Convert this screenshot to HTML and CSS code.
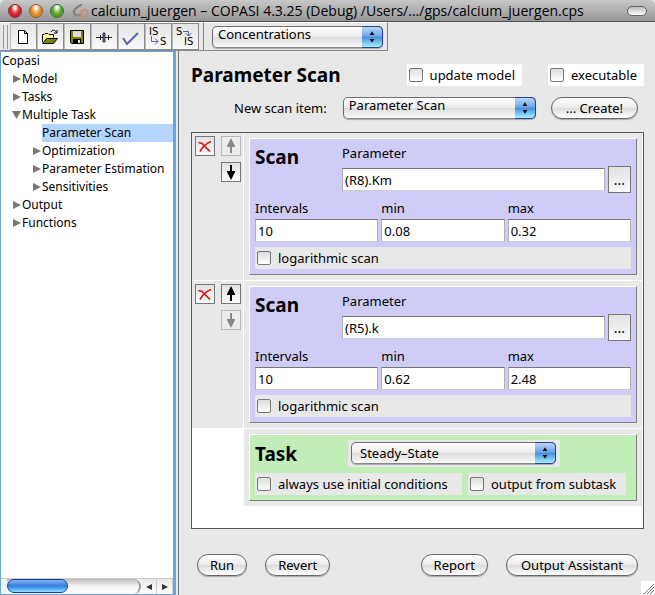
FILE: index.html
```html
<!DOCTYPE html>
<html lang="en">
<head>
<meta charset="utf-8">
<title>calcium_juergen - COPASI 4.3.25 (Debug)</title>
<link rel="stylesheet" href="styles.css">
</head>
<body>
<svg class="defs" width="0" height="0" aria-hidden="true">
  <symbol id="cross" viewBox="0 0 14 12"><path d="M0.500 2.500L4 3.500L12 11.500M13 1.500C8 3.500 4.500 7 2 11.500" fill="none" stroke="#d81818" stroke-width="1.700"/></symbol>
  <symbol id="up" viewBox="0 0 10 16"><path d="M5 0L9 8V9H6V15H4V9H1V8Z" fill="currentColor"/></symbol>
  <symbol id="down" viewBox="0 0 10 16"><path d="M5 16L9 8V7H6V1H4V7H1V8Z" fill="currentColor"/></symbol>
  <symbol id="updown" viewBox="0 0 21 20"><path d="M10.500 4L13 8H8ZM10.500 16L13 12H8Z" fill="#111"/></symbol>
  <symbol id="closed" viewBox="0 0 9 10"><path d="M1 1L9 5L1 9Z" fill="#777"/></symbol>
  <symbol id="open" viewBox="0 0 9 10"><path d="M0 1H9L4.500 9Z" fill="#777"/></symbol>
</svg>

<header class="titlebar">
  <button class="light red" aria-label="Close"></button>
  <button class="light amber" aria-label="Minimize"></button>
  <button class="light green" aria-label="Zoom"></button>
  <svg class="logo" width="17" height="14" viewBox="0 0 17 14" fill="none" stroke-linecap="round" aria-hidden="true">
    <path d="M9 1C5 3 1 6 2 9C3 12 8 12 9 10" stroke="#8d7b70" stroke-width="2"/>
    <path d="M9 10C9 5 15 4 15 8C15 12 9 14 6 12" stroke="#bf9478" stroke-width="2"/>
  </svg>
  <span class="title">calcium_juergen – COPASI 4.3.25 (Debug) /Users/.../gps/calcium_juergen.cps</span>
  <button class="pill" aria-label="Toggle toolbar"></button>
</header>

<div class="toolbar">
  <div class="tools">
    <span class="grip"></span>
    <button class="tool" aria-label="New"><svg width="26" height="26" viewBox="0 0 26 26"><path d="M7.500 6.500H13.500L16.500 9.500V19.500H7.500ZM13.500 6.500V9.500H16.500" fill="#fff" stroke="#000"/></svg></button>
    <button class="tool" aria-label="Open"><svg width="26" height="26" viewBox="0 0 26 26"><path d="M4.500 18V10.500H6L7 9.500H10L11 10.500H15.500V13.500" fill="#ffffa0" stroke="#000"/><path d="M4.500 19.500L8.500 14.500H19.500L15.500 19.500Z" fill="#808000" stroke="#000"/><path d="M13 8C14 5.500 17 5.500 18.500 8.500M19 6V9H16" fill="none" stroke="#000"/></svg></button>
    <button class="tool" aria-label="Save"><svg width="26" height="26" viewBox="0 0 26 26"><path d="M5.500 6.500H18.500V19.500H6.500L5.500 18.500Z" fill="#808000" stroke="#000"/><path d="M8 7H16V13H8Z" fill="#ddd"/><path d="M8 15H16V19H8Z" fill="#000"/><path d="M13 16H15V19H13Z" fill="#ddd"/></svg></button>
    <button class="tool" aria-label="Slider"><svg width="26" height="26" viewBox="0 0 26 26"><path d="M4 13.500H20M8.500 11V16M16.500 11V16" stroke="#222" fill="none"/><path d="M11 9H13V18H11Z" fill="#5961b8" stroke="#222" stroke-width=".8"/></svg></button>
    <button class="tool" aria-label="Check"><svg width="26" height="26" viewBox="0 0 26 26"><path d="M4 14L8 20L19 9" fill="none" stroke="#5961bb" stroke-width="2"/></svg></button>
    <button class="tool" aria-label="Initial state to state"><svg width="26" height="26" viewBox="0 0 26 26"><text x="3" y="11" class="glyph">IS</text><text x="14" y="21" class="glyph">S</text><path d="M5.500 12V17.500H12M9 14.500L12 17.500L9 20.500" fill="none" stroke="#5961bb"/></svg></button>
    <button class="tool" aria-label="State to initial state"><svg width="26" height="26" viewBox="0 0 26 26"><text x="3" y="11" class="glyph">S</text><text x="11" y="21" class="glyph">IS</text><path d="M10 7.500H15.500V12M12.500 9L15.500 12L18.500 9" fill="none" stroke="#5961bb"/></svg></button>
  </div>
  <div class="units">
    <span class="combo high"><select aria-label="Units"><option>Concentrations</option></select><svg class="arrows"><use href="#updown"/></svg></span>
  </div>
</div>

<div class="main">
  <nav class="sidebar">
    <ul class="tree">
      <li class="root">Copasi</li>
      <li><svg><use href="#closed"/></svg>Model</li>
      <li><svg><use href="#closed"/></svg>Tasks</li>
      <li><svg><use href="#open"/></svg>Multiple Task</li>
      <li class="sub"><span class="selected">Parameter Scan</span></li>
      <li class="sub"><svg><use href="#closed"/></svg>Optimization</li>
      <li class="sub"><svg><use href="#closed"/></svg>Parameter Estimation</li>
      <li class="sub"><svg><use href="#closed"/></svg>Sensitivities</li>
      <li><svg><use href="#closed"/></svg>Output</li>
      <li><svg><use href="#closed"/></svg>Functions</li>
    </ul>
    <div class="scrollbar">
      <div class="track"><div class="thumb"></div></div>
      <button aria-label="Scroll left"><svg width="8" height="8" viewBox="0 0 8 8"><path d="M7 1V7L1 4Z" fill="#333"/></svg></button>
      <button aria-label="Scroll right"><svg width="8" height="8" viewBox="0 0 8 8"><path d="M1 1V7L7 4Z" fill="#333"/></svg></button>
    </div>
  </nav>
  <div class="splitter"></div>

  <main class="content">
    <div class="head">
      <h1>Parameter Scan</h1>
      <label class="check white"><input type="checkbox">update model</label>
      <label class="check white"><input type="checkbox">executable</label>
    </div>
    <div class="create">
      <label for="item">New scan item:</label>
      <span class="combo high"><select id="item"><option>Parameter Scan</option></select><svg class="arrows"><use href="#updown"/></svg></span>
      <button class="push">... Create!</button>
    </div>

    <div class="frame">
      <div class="row">
        <div class="moves">
          <button class="mini" aria-label="Delete"><svg width="14" height="12"><use href="#cross"/></svg></button>
          <div class="pair">
            <button class="mini" disabled aria-label="Move up"><svg width="10" height="16"><use href="#up"/></svg></button>
            <button class="mini" aria-label="Move down"><svg width="10" height="16"><use href="#down"/></svg></button>
          </div>
        </div>
        <div class="cell">
          <section class="panel scan">
            <div class="param">
              <h2>Scan</h2>
              <label for="p1">Parameter</label>
              <input type="text" id="p1" value="(R8).Km">
              <button class="more" aria-label="Choose">...</button>
            </div>
            <div class="range">
              <label for="i1">Intervals</label><label for="a1">min</label><label for="b1">max</label>
              <input type="text" id="i1" value="10"><input type="text" id="a1" value="0.08"><input type="text" id="b1" value="0.32">
            </div>
            <label class="check"><input type="checkbox">logarithmic scan</label>
          </section>
        </div>
      </div>
      <div class="row">
        <div class="moves">
          <button class="mini" aria-label="Delete"><svg width="14" height="12"><use href="#cross"/></svg></button>
          <div class="pair">
            <button class="mini" aria-label="Move up"><svg width="10" height="16"><use href="#up"/></svg></button>
            <button class="mini" disabled aria-label="Move down"><svg width="10" height="16"><use href="#down"/></svg></button>
          </div>
        </div>
        <div class="cell">
          <section class="panel scan">
            <div class="param">
              <h2>Scan</h2>
              <label for="p2">Parameter</label>
              <input type="text" id="p2" value="(R5).k">
              <button class="more" aria-label="Choose">...</button>
            </div>
            <div class="range">
              <label for="i2">Intervals</label><label for="a2">min</label><label for="b2">max</label>
              <input type="text" id="i2" value="10"><input type="text" id="a2" value="0.62"><input type="text" id="b2" value="2.48">
            </div>
            <label class="check"><input type="checkbox">logarithmic scan</label>
          </section>
        </div>
      </div>
      <div class="row">
        <div class="blank"></div>
        <div class="cell">
          <section class="panel task">
            <div class="taskhead">
              <h2>Task</h2>
              <div class="holder"><span class="combo"><select aria-label="Task"><option>Steady–State</option></select><svg class="arrows"><use href="#updown"/></svg></span></div>
            </div>
            <div class="options">
              <label class="check"><input type="checkbox">always use initial conditions</label>
              <label class="check"><input type="checkbox">output from subtask</label>
            </div>
          </section>
        </div>
      </div>
    </div>

    <footer class="actions">
      <button class="push">Run</button>
      <button class="push">Revert</button>
      <span class="space"></span>
      <button class="push">Report</button>
      <button class="push wide">Output Assistant</button>
    </footer>
    <svg class="resize" width="14" height="14" viewBox="0 0 14 14" aria-hidden="true"><path d="M0 0H14V14H0Z" fill="#fff"/><path d="M3 13L13 3M6 13L13 6M9 13L13 9" stroke="#777"/></svg>
  </main>
</div>
</body>
</html>
```

FILE: styles.css
```css
* { box-sizing: border-box; }

body {
  margin: 0;
  min-height: 100vh;
  display: flex;
  flex-direction: column;
  background: #e8e8e8;
  color: #000;
  font: 13px/18px "Noto Sans", "Open Sans", sans-serif;
}

button, input, select { font: inherit; color: inherit; margin: 0; }
button { padding: 0; }
svg { display: block; flex: none; }
.defs { position: absolute; }

.titlebar {
  display: flex;
  align-items: center;
  height: 22px;
  padding: 0 8px;
  gap: 7px;
  background: linear-gradient(#c8c8c8, #969696);
  border-bottom: 1px solid #515151;
  border-radius: 5px 5px 0 0;
}
.title { flex: 1; white-space: nowrap; font: 14px/20px "Open Sans", "Noto Sans", sans-serif; }
.logo { margin: 0 -5px 0 1px; }
.light {
  width: 14px;
  height: 14px;
  border: 1px solid #555;
  border-radius: 50%;
}
.red { background: radial-gradient(ellipse at 50% 20%, #fff 8%, #e8484c 40%, #c01820 65%, #ff9c9c); border-color: #8c2428; }
.amber { background: radial-gradient(ellipse at 50% 20%, #fff 8%, #f0a850 40%, #d87818 65%, #ffe890); border-color: #8c5a24; }
.green { background: radial-gradient(ellipse at 50% 20%, #fff 8%, #7cbc4c 40%, #489420 65%, #c4f890); border-color: #3c6c24; }
.pill {
  width: 20px;
  height: 10px;
  border: 1px solid #666;
  border-radius: 5px;
  background: linear-gradient(#bbb, #fff);
}

.toolbar { display: flex; height: 29px; }
.tools, .units { display: flex; align-items: center; border-bottom: 1px solid #888; border-top: 1px solid #fff; }
.tools { width: 203px; padding-left: 3px; }
.grip { width: 5px; height: 24px; margin-right: 2px; border: solid #999; border-width: 0 1px; }
.tool {
  width: 27px;
  height: 27px;
  border: 1px solid #8a8a8a;
  border-left-color: #bbb;
  background: linear-gradient(#e4e4e4, #fafafa);
}
.glyph { font: 10px "DejaVu Sans", sans-serif; }
.units { width: 185px; padding: 0 4px 0 8px; border-left: 1px solid #888; border-right: 1px solid #888; }

.combo { position: relative; display: flex; flex: 1; height: 22px; }
.combo select {
  appearance: none;
  width: 100%;
  padding: 0 24px 0 8px;
  border: 1px solid #707070;
  border-bottom-color: #888;
  border-radius: 5px;
  background: linear-gradient(#fff, #ececec 48%, #dedede 52%, #fafafa);
  box-shadow: 0 1px 1px #aaa;
  line-height: 18px;
}
.combo.high select { padding: 0 24px 6px 5px; line-height: 14px; }
.arrows {
  position: absolute;
  top: 0;
  right: 0;
  width: 21px;
  height: 22px;
  border: 1px solid #25419a;
  border-left: 0;
  border-radius: 0 5px 5px 0;
  background: linear-gradient(#bcd6f6, #6aa4e8 46%, #4a90e0 52%, #a8f0ff);
  pointer-events: none;
}

.main { display: flex; flex: 1; }
.sidebar {
  display: flex;
  flex-direction: column;
  width: 176px;
  background: #fff;
  border: solid #6ba5de;
  border-width: 1px 3px 1px 1px;
}
.tree { flex: 1; margin: 0; padding: 0; list-style: none; font-size: 12px; }
.tree li { display: flex; align-items: center; height: 18px; padding-left: 11px; white-space: nowrap; }
.tree li.root { padding-left: 1px; }
.tree li.sub { padding-left: 31px; }
.tree svg { width: 9px; height: 10px; margin-right: 1px; }
.selected { flex: 1; margin-left: 10px; background: #b4d5ff; }
.scrollbar { display: flex; height: 16px; padding-left: 6px; background: #f4f4f4; border-top: 1px solid #ccc; }
.track {
  flex: 1;
  border-radius: 0 8px 8px 0;
  background: linear-gradient(#bbb, #f6f6f6 50%, #fff);
  border-right: 2px solid #999;
}
.thumb {
  width: 46%;
  height: 14px;
  border: 1px solid #1640a8;
  border-radius: 7px;
  background: linear-gradient(#84b8f4, #3c80e0 45%, #3c90ee 60%, #8ce0ff);
}
.scrollbar button {
  display: grid;
  place-items: center;
  width: 16px;
  border: 0;
  border-right: 1px solid #ccc;
  background: linear-gradient(#e8e8e8, #fff);
}
.splitter { width: 3px; border-right: 1px solid #777; }

.content { position: relative; flex: 1; min-width: 0; display: flex; flex-direction: column; padding: 13px 11px 19px 12px; }
h1, h2 { margin: 0; font-weight: 700; font-size: 19px; line-height: 22px; }
.head { display: flex; gap: 26px; }
.head h1 { flex: 1; }
.check { display: flex; align-items: center; gap: 7px; height: 22px; padding: 0 7px 0 2px; background: #e8e8e8; white-space: nowrap; }
.white { background: #fff; }
.check input {
  appearance: none;
  width: 14px;
  height: 14px;
  border: 1px solid #777;
  border-radius: 2px;
  background: linear-gradient(#ddd, #fff);
}

.create { display: flex; align-items: center; margin: 11px 6px 0 43px; }
.create .combo { margin: 0 15px 0 16px; }
.create .push, .push.wide { padding: 0 14px; }
.push {
  height: 22px;
  padding: 0 12px;
  border: 1px solid #666;
  border-radius: 11px;
  background: linear-gradient(#fff, #eee 45%, #ddd 52%, #fff);
  box-shadow: 0 1px 1px #aaa;
  line-height: 18px;
  white-space: nowrap;
}

.frame { flex: 1; margin-top: 13px; padding-right: 1px; background: #fff; border: 1px solid #555; }
.row { display: flex; gap: 1px; margin-bottom: 1px; }
.moves { display: flex; gap: 6px; width: 51px; padding: 3px 2px 3px 3px; background: #e8e8e8; }
.blank { width: 51px; }
.pair { display: flex; flex-direction: column; gap: 6px; }
.mini {
  display: grid;
  place-items: center;
  width: 20px;
  height: 20px;
  border: 1px solid #777;
  background: linear-gradient(#e2e2e2, #fafafa);
}
.mini:disabled { color: #888; border-color: #b8b8b8; background: #ececec; }
.cell { flex: 1; min-width: 0; padding: 5px; background: #e8e8e8; }
.panel { padding: 5px; border: 1px solid; border-color: #fff #808080 #808080 #fff; }
.scan { background: #cfcdf8; }
.task { background: #c0edb8; }
.param { display: grid; grid-template-columns: 84px 1fr 23px; column-gap: 3px; }
.param h2 { grid-row: span 2; padding-top: 2px; }
.param label { grid-column: 2 / 4; height: 22px; }
.param input { align-self: center; }
input[type="text"] {
  width: 100%;
  height: 23px;
  padding: 0 2px;
  border: 1px solid;
  border-color: #777 #b0b0b0 #ccc #b0b0b0;
  background: #fff;
}
.more { height: 27px; border: 1px solid #777; background: linear-gradient(#e2e2e2, #fafafa); font-size: 14px; }
.range { display: grid; grid-template-columns: repeat(3, 1fr); column-gap: 3px; margin: 6px 0 5px; }
.range label { height: 20px; }
.taskhead { display: flex; align-items: center; }
.taskhead h2 { width: 93px; }
.holder { display: flex; width: 212px; padding: 2px 4px 3px 3px; background: #e8e8e8; }
.options { display: grid; grid-template-columns: 207px 158px; gap: 6px; margin-top: 6px; }

.actions { display: flex; gap: 18px; margin-top: 25px; padding: 0 6px; }
.space { flex: 1; }
.resize { position: absolute; right: 0; bottom: 0; }
```
